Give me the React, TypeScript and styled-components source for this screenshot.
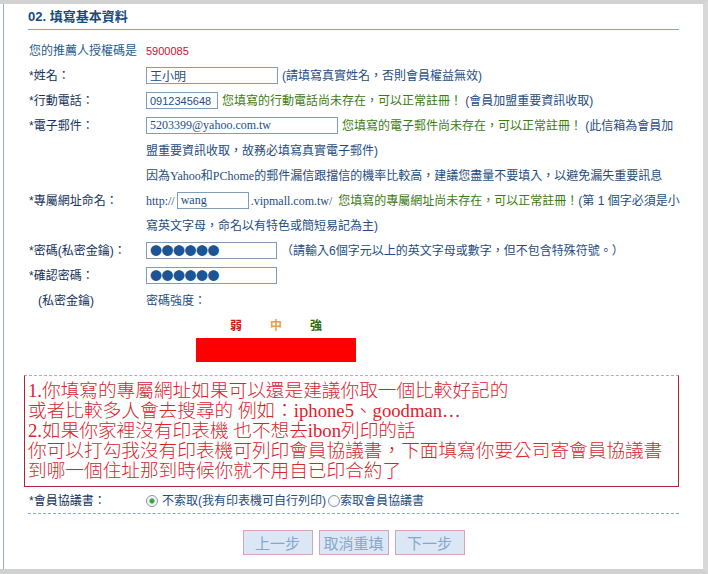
import React from "react";
import styled, { createGlobalStyle } from "styled-components";

const GlobalStyle = createGlobalStyle`
  html, body { margin: 0; padding: 0; background: #ffffff; }
  body {
    font-family: "Liberation Sans", "Noto Sans CJK TC", sans-serif;
    font-size: 12px;
  }
  * { box-sizing: border-box; }
`;

const Page = styled.div`
  width: 708px;
  height: 574px;
  background: #ffffff;
  border-top: 4px solid #d2d2d2;
  border-right: 5px solid #d8d8d8;
  border-bottom: 5px solid #d0d0d0;
  padding-left: 3px;
`;

const Panel = styled.div`
  height: 100%;
  border-left: 1px solid #93b2cb;
  padding-left: 24px;
`;

const Form = styled.div`
  width: 651px;
`;

const Header = styled.h2`
  margin: 0;
  height: 26px;
  line-height: 26px;
  font-size: 13px;
  font-weight: bold;
  color: #174a7c;
  border-bottom: 1px solid #7ea8c6;
`;

const Grid = styled.div<{ $top: number }>`
  display: grid;
  grid-template-columns: 118px 536px;
  line-height: 25px;
  margin-top: ${(p) => p.$top}px;
`;

const Label = styled.div<{ $tone?: "dark" | "blue"; $indent?: number }>`
  padding-left: ${(p) => p.$indent ?? 1}px;
  color: ${(p) => (p.$tone === "blue" ? "#1f5b8d" : "#14325a")};
  white-space: nowrap;
`;

const Cell = styled.div`
  color: #1e4d83;
`;

const Code = styled.span`
  color: #c8102e;
  font-size: 11px;
`;

const Field = styled.input<{ $w: number; $kind?: "serif" | "digits" | "dots"; $gap?: number }>`
  display: inline-block;
  vertical-align: top;
  margin: 3px 0 0 ${(p) => p.$gap ?? 0}px;
  width: ${(p) => p.$w}px;
  height: 17px;
  border: 1px solid #7f9db9;
  padding: 0 0 0 3px;
  background: #ffffff;
  outline: none;
  color: ${(p) => (p.$kind === "dots" ? "#1b5595" : "#1e4d83")};
  font-family: ${(p) =>
    p.$kind === "serif"
      ? `"Liberation Serif", "Noto Sans CJK TC", serif`
      : p.$kind === "dots"
      ? `"Noto Sans CJK TC", sans-serif`
      : `"Liberation Sans", "Noto Sans CJK TC", sans-serif`};
  font-size: ${(p) => (p.$kind === "digits" ? 11 : 12)}px;
  letter-spacing: ${(p) => (p.$kind === "dots" ? "-0.5px" : "normal")};
  line-height: 15px;
`;

const Note = styled.span<{ $gap?: number }>`
  margin-left: ${(p) => p.$gap ?? 0}px;
  color: #1e4d83;
`;

const Ok = styled.span<{ $gap?: number }>`
  margin-left: ${(p) => p.$gap ?? 0}px;
  color: #3b7b12;
`;

const Serif = styled.span<{ $gap?: number }>`
  margin-left: ${(p) => p.$gap ?? 0}px;
  font-family: "Liberation Serif", "Noto Sans CJK TC", serif;
`;

const Strength = styled.div`
  margin-left: 168px;
  width: 160px;
`;

const Levels = styled.div`
  display: flex;
  gap: 28px;
  padding-left: 34px;
  height: 23px;
  line-height: 25px;
  font-weight: bold;
`;

const Level = styled.span<{ $c: string }>`
  color: ${(p) => p.$c};
`;

const Bar = styled.div`
  height: 24px;
  margin-top: 1px;
  background: #ff0000;
`;

const Notice = styled.div`
  margin: 13px 0 0 -4px;
  width: 655px;
  border: 1px solid #ad2331;
  border-top: 1px dashed #c9a3ab;
  padding: 5px 2px 5px 3px;
  font-family: "Liberation Serif", "Noto Sans CJK TC", serif;
  font-weight: 300;
  font-size: 18.67px;
  line-height: 20px;
  color: #d9242c;
  white-space: nowrap;
`;

const Radio = styled.span<{ $on?: boolean; $gap?: number }>`
  display: inline-block;
  width: 12px;
  height: 12px;
  margin-left: ${(p) => p.$gap ?? 0}px;
  border-radius: 50%;
  border: 1px solid #8a98a6;
  vertical-align: -2px;
  background: ${(p) =>
    p.$on
      ? "radial-gradient(circle, #2f9a3a 0, #45b04c 2.2px, #eef2f5 3px, #ffffff 100%)"
      : "radial-gradient(circle, #ffffff 0, #f4f6f8 60%, #dfe4ea 100%)"};
`;

const Choice = styled.span<{ $gap?: number }>`
  margin-left: ${(p) => p.$gap ?? 0}px;
  color: #1e4d83;
`;

const Divider = styled.div`
  margin-top: -1px;
  border-top: 1px dashed #86a8c3;
`;

const Buttons = styled.div`
  display: flex;
  justify-content: center;
  gap: 6px;
  margin-top: 16px;
`;

const Btn = styled.button`
  width: 70px;
  height: 25px;
  padding: 0;
  background: #dce7f6;
  border: 1px solid #d6a3b7;
  color: #87a6cc;
  font-family: "Noto Sans CJK TC", sans-serif;
  font-size: 15px;
  line-height: 23px;
`;

export default function App() {
  return (
    <>
      <GlobalStyle />
      <Page>
        <Panel>
          <Form>
            <Header>02. 填寫基本資料</Header>
            <Grid $top={9}>
              <Label $tone="blue">您的推薦人授權碼是</Label>
              <Cell>
                <Code>5900085</Code>
              </Cell>

              <Label>*姓名：</Label>
              <Cell>
                <Field $w={132} readOnly value="王小明" />
                <Note $gap={4}>(請填寫真實姓名，否則會員權益無效)</Note>
              </Cell>

              <Label>*行動電話：</Label>
              <Cell>
                <Field $w={72} $kind="digits" readOnly value="0912345648" />
                <Ok $gap={4}>您填寫的行動電話尚未存在，可以正常註冊！</Ok>
                <Note> (會員加盟重要資訊收取)</Note>
              </Cell>

              <Label>*電子郵件：</Label>
              <Cell>
                <Field $w={192} $kind="serif" readOnly value="5203399@yahoo.com.tw" />
                <Ok $gap={4}>您填寫的電子郵件尚未存在，可以正常註冊！</Ok>
                <Note> (此信箱為會員加盟重要資訊收取，故務必填寫真實電子郵件)</Note>
                <br />
                <Note>
                  因為<Serif>Yahoo</Serif>和<Serif>PChome</Serif>的郵件漏信跟擋信的機率比較高，建議您盡量不要填入，以避免漏失重要訊息
                </Note>
              </Cell>

              <Label>*專屬網址命名：</Label>
              <Cell>
                <Serif>http://</Serif>
                <Field $w={72} $kind="serif" $gap={2} readOnly value="wang" />
                <Serif $gap={2}>.vipmall.com.tw/</Serif>
                <Ok $gap={6}>您填寫的專屬網址尚未存在，可以正常註冊！</Ok>
                <Note>(第 1 個字必須是小寫英文字母，命名以有特色或簡短易記為主)</Note>
              </Cell>

              <Label>*密碼(私密金鑰)：</Label>
              <Cell>
                <Field $w={131} $kind="dots" readOnly value="●●●●●●" />
                <Note $gap={4}>（請輸入6個字元以上的英文字母或數字，但不包含特殊符號。）</Note>
              </Cell>

              <Label>*確認密碼：</Label>
              <Cell>
                <Field $w={131} $kind="dots" readOnly value="●●●●●●" />
              </Cell>

              <Label $indent={10}>(私密金鑰)</Label>
              <Cell>密碼強度：</Cell>
            </Grid>

            <Strength>
              <Levels>
                <Level $c="#d01818">弱</Level>
                <Level $c="#e6a04c">中</Level>
                <Level $c="#2c6a06">強</Level>
              </Levels>
              <Bar />
            </Strength>

            <Notice>
              1.你填寫的專屬網址如果可以還是建議你取一個比較好記的
              <br />
              或者比較多人會去搜尋的 例如：iphone5、goodman…
              <br />
              2.如果你家裡沒有印表機 也不想去ibon列印的話
              <br />
              你可以打勾我沒有印表機可列印會員協議書，下面填寫你要公司寄會員協議書
              <br />
              到哪一個住址那到時候你就不用自已印合約了
            </Notice>

            <Grid $top={2}>
              <Label>*會員協議書：</Label>
              <Cell>
                <Radio $on />
                <Choice $gap={4}>不索取(我有印表機可自行列印)</Choice>
                <Radio $gap={2} />
                <Choice>索取會員協議書</Choice>
              </Cell>
            </Grid>

            <Divider />

            <Buttons>
              <Btn type="button">上一步</Btn>
              <Btn type="button">取消重填</Btn>
              <Btn type="button">下一步</Btn>
            </Buttons>
          </Form>
        </Panel>
      </Page>
    </>
  );
}
